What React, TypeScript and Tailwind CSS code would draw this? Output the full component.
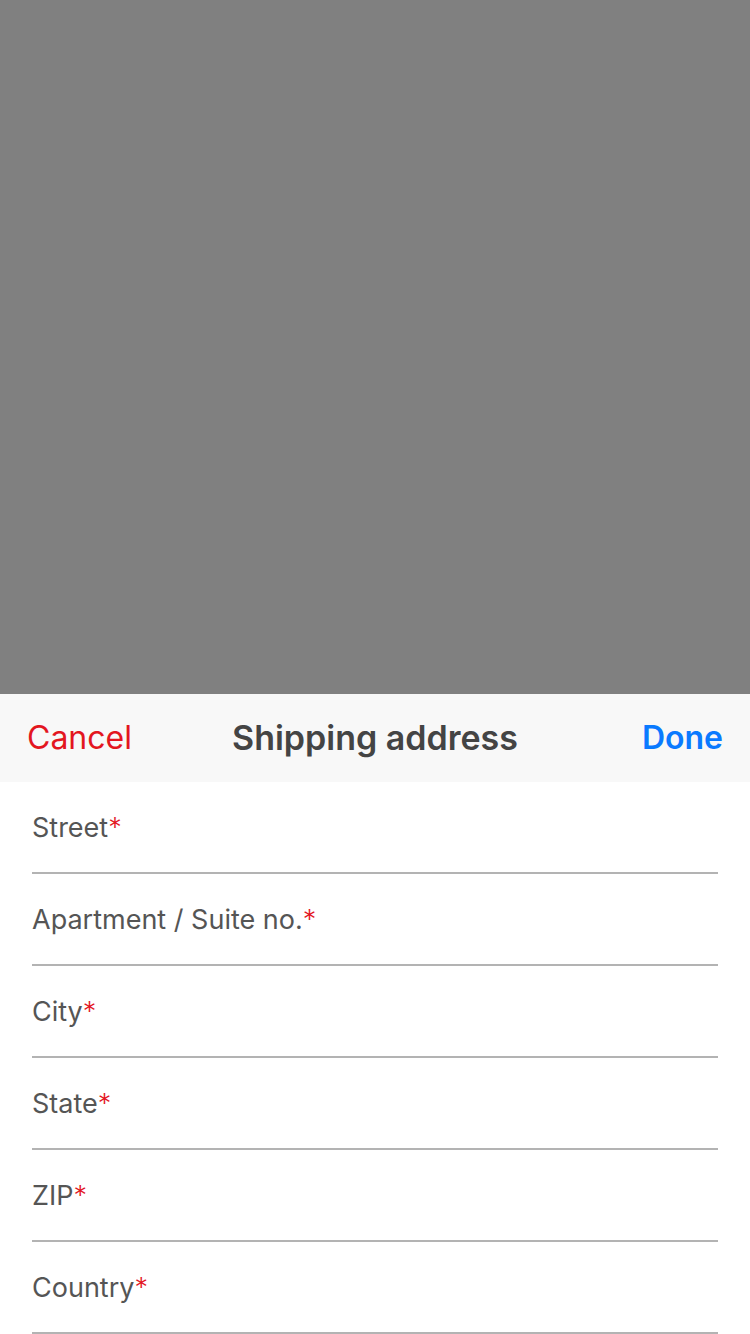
const fields = ['Street', 'Apartment / Suite no.', 'City', 'State', 'ZIP', 'Country']

export default function App() {
  return (
    <div className="flex flex-col w-[750px] h-[1334px] bg-white font-['Inter','Liberation_Sans',sans-serif] overflow-hidden">
      {/* dimmed backdrop */}
      <div className="h-[694px] bg-[#808080]" />

      {/* sheet header */}
      <div className="h-[88px] bg-[#f8f8f8] grid grid-cols-[1fr_auto_1fr] items-center px-[27px]">
        <button className="justify-self-start text-[32px] text-[#e3161f] leading-none">Cancel</button>
        <div className="text-[34px] font-semibold text-[#444444] leading-none">Shipping address</div>
        <button className="justify-self-end text-[32px] font-semibold text-[#0a7aff] leading-none">Done</button>
      </div>

      {/* form */}
      <div className="flex flex-col px-[32px]">
        {fields.map((f) => (
          <div key={f} className="h-[92px] flex items-center border-b-2 border-[#b3b3b3]">
            <span className="text-[27px] text-[#555555] leading-none">
              {f}
              <span className="text-[#e3161f] font-light">*</span>
            </span>
          </div>
        ))}
      </div>
    </div>
  )
}
